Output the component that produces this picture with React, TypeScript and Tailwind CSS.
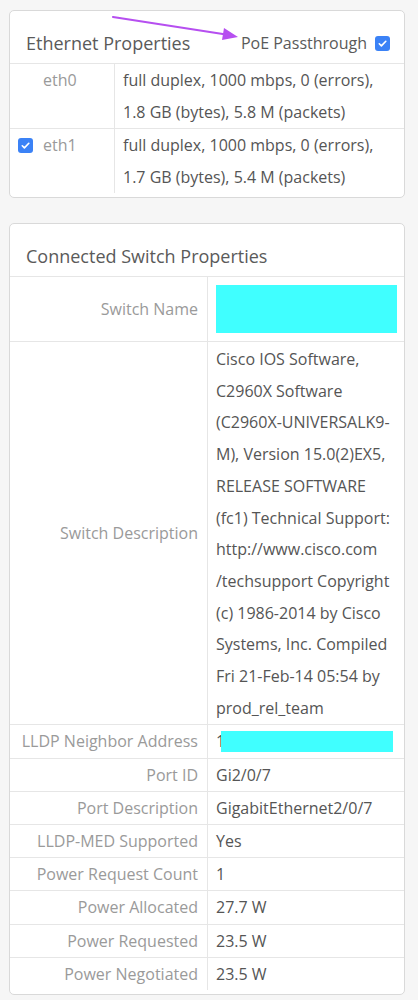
import React from "react";

function Check() {
  return (
    <span className="inline-flex items-center justify-center w-[15px] h-[15px] rounded-[3px] bg-[#3b82f6] shrink-0">
      <svg width="11" height="11" viewBox="0 0 12 12" fill="none">
        <path d="M2.5 6.3l2.3 2.3L9.6 3.6" stroke="white" strokeWidth="1.8" strokeLinecap="round" strokeLinejoin="round" />
      </svg>
    </span>
  );
}

const ports = [
  {name: "eth0", on: false, lines: ["full duplex, 1000 mbps, 0 (errors),", "1.8 GB (bytes), 5.8 M (packets)"]},
  {name: "eth1", on: true, lines: ["full duplex, 1000 mbps, 0 (errors),", "1.7 GB (bytes), 5.4 M (packets)"]},
];

const description = [
  "Cisco IOS Software,",
  "C2960X Software",
  "(C2960X-UNIVERSALK9-",
  "M), Version 15.0(2)EX5,",
  "RELEASE SOFTWARE",
  "(fc1) Technical Support:",
  "http://www.cisco.com",
  "/techsupport Copyright",
  "(c) 1986-2014 by Cisco",
  "Systems, Inc. Compiled",
  "Fri 21-Feb-14 05:54 by",
  "prod_rel_team",
];

const simpleRows = [
  ["Port ID", "Gi2/0/7"],
  ["Port Description", "GigabitEthernet2/0/7"],
  ["LLDP-MED Supported", "Yes"],
  ["Power Request Count", "1"],
  ["Power Allocated", "27.7 W"],
  ["Power Requested", "23.5 W"],
  ["Power Negotiated", "23.5 W"],
];

function Row({label, children, last}: {label: string; children: React.ReactNode; last?: boolean}) {
  return (
    <div className={"flex leading-[32.2px] " + (last ? "" : "border-b border-[#e6e6e6]")}>
      <div className="w-[198px] shrink-0 border-r border-[#e6e6e6] pr-[9px] text-right text-[#9a9a9a] flex items-center justify-end">
        {label}
      </div>
      <div className="flex-1 pl-2 text-[#555]">{children}</div>
    </div>
  );
}

export default function App() {
  return (
    <div className="min-h-[1000px] bg-[#f6f6f6] pt-[10px] pl-[9px] font-['Open_Sans',sans-serif] text-[16px] leading-8 relative">
      <svg className="absolute left-0 top-0 pointer-events-none" width="260" height="50">
        <line x1="113" y1="17" x2="226" y2="34.5" stroke="#b64ff0" strokeWidth="2.2" strokeLinecap="round" />
        <polygon points="238,37 224,28 222,40" fill="#b64ff0" />
      </svg>

      <div className="w-[396px] bg-white border border-[#d9d9d9] rounded-[5px] pb-1">
        <div className="flex items-center justify-between border-b border-[#e6e6e6] pl-4 pr-[14px] pt-5 pb-2 leading-6">
          <span className="text-[18px] text-[#5a5a5a]">Ethernet Properties</span>
          <span className="flex items-center gap-[8px] text-[#5a5a5a]">
            PoE Passthrough <Check />
          </span>
        </div>
        {ports.map((p, i) => (
          <div key={p.name} className={"flex " + (i < ports.length - 1 ? "border-b border-[#e6e6e6]" : "")}>
            <div className="w-[105px] shrink-0 border-r border-[#e6e6e6] flex items-start">
              <span className="w-[33px] h-8 flex items-center pl-2">{p.on && <Check />}</span>
              <span className="text-[#9a9a9a]">{p.name}</span>
            </div>
            <div className="flex-1 pl-2 text-[#555]">
              {p.lines.map((l) => (
                <div key={l}>{l}</div>
              ))}
            </div>
          </div>
        ))}
      </div>

      <div className="w-[396px] mt-[25px] bg-white border border-[#d9d9d9] rounded-[5px] pb-1">
        <div className="border-b border-[#e6e6e6] pl-4 pt-5 pb-2 leading-6">
          <div className="text-[18px] text-[#5a5a5a]">Connected Switch Properties</div>
        </div>
        <Row label="Switch Name">
          <div className="py-2 pr-[7px]">
            <div className="h-12 bg-[#40ffff]" />
          </div>
        </Row>
        <Row label="Switch Description">
          <div className="pt-[2px] leading-[31.7px]">
            {description.map((l) => (
              <div key={l}>{l}</div>
            ))}
          </div>
        </Row>
        <Row label="LLDP Neighbor Address">
          <div className="flex items-center h-[32.2px]">
            <span>1</span>
            <span className="ml-[-4px] w-[172px] h-[21px] bg-[#40ffff]" />
          </div>
        </Row>
        {simpleRows.map(([k, v], i) => (
          <Row key={k} label={k} last={i === simpleRows.length - 1}>
            {v}
          </Row>
        ))}
      </div>
    </div>
  );
}
